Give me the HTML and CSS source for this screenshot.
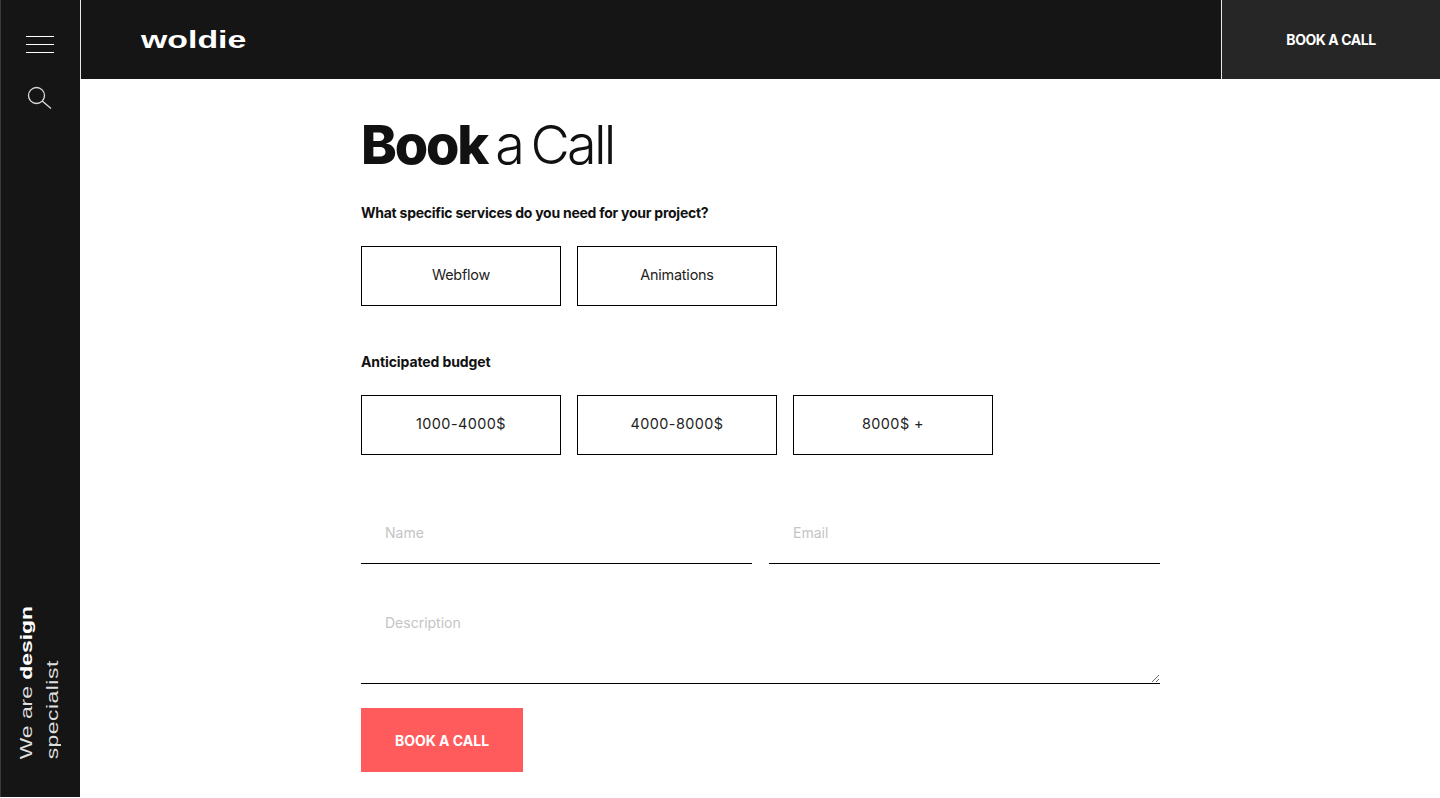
FILE: index.html
```html
<!DOCTYPE html>
<html lang="en">
<head>
<meta charset="utf-8">
<title>Book a Call - woldie</title>
<link rel="stylesheet" href="styles.css">
</head>
<body>
<div class="page">
  <aside class="side">
    <div class="side-top">
      <button class="burger" aria-label="Menu"><span></span><span></span><span></span></button>
      <svg class="search" width="26" height="26" viewBox="0 0 26 26" fill="none" stroke="#dcdcdc" stroke-width="1.3"><circle cx="9.5" cy="9.5" r="8"/><path d="M15.2 15l8.8 7.6"/></svg>
    </div>
    <div class="tagline"><div>We are <b>design</b></div><div class="tag-2">specialist</div></div>
  </aside>
  <div class="main">
    <header class="top">
      <a class="logo">woldie</a>
      <a class="top-cta">BOOK A CALL</a>
    </header>
    <form class="form">
      <h1><b>Book</b> a Call</h1>
      <p class="q">What specific services do you need for your project?</p>
      <div class="opts">
        <div class="opt">Webflow</div>
        <div class="opt">Animations</div>
      </div>
      <p class="q q2">Anticipated budget</p>
      <div class="opts">
        <div class="opt num">1000-4000$</div>
        <div class="opt num">4000-8000$</div>
        <div class="opt num">8000$ +</div>
      </div>
      <div class="fields">
        <input type="text" placeholder="Name">
        <input type="text" placeholder="Email">
      </div>
      <textarea placeholder="Description"></textarea>
      <button type="button" class="submit">BOOK A CALL</button>
    </form>
  </div>
</div>
</body>
</html>
```
FILE: styles.css
```css
* { box-sizing: border-box; }
html, body { margin: 0; height: 100%; overflow: hidden; background: #fff; }
body { font-family: Inter, "Liberation Sans", sans-serif; color: #111; }
.page { display: flex; height: 798px; }
.side {
  width: 80px; flex: none; height: 797px; background: #151515;
  border-left: 1px solid #3a3a3a;
  display: flex; flex-direction: column; justify-content: space-between; align-items: center;
}
.side-top { display: flex; flex-direction: column; align-items: center; padding-top: 36px; }
.burger { width: 28px; height: 17px; padding: 0; margin: 0 0 0 -1px; border: 0; background: none; display: flex; flex-direction: column; justify-content: space-between; }
.burger span { display: block; height: 1px; background: #fff; }
.search { margin-top: 33px; margin-left: -1px; }
.tagline {
  writing-mode: vertical-rl; white-space: nowrap;
  transform: scaleY(1.43) rotate(180deg);
  font-family: "Liberation Sans", Arial, sans-serif; font-size: 16px; line-height: 26px;
  color: #dedede; margin: 0 0 61px -2px;
}
.tagline b { color: #fff; }
.tag-2 { letter-spacing: 0.35px; }
.main { flex: 1; min-width: 0; }
.top {
  height: 79px; background: #151515; border-left: 1px solid #e8e8e8;
  display: flex; justify-content: space-between; align-items: stretch;
}
.logo {
  font-family: "Liberation Sans", Arial, sans-serif; font-weight: 700; font-size: 24px; color: #fff;
  align-self: center; margin: 0 0 0 60px; transform: scaleX(1.41); transform-origin: left center;
}
.top-cta {
  width: 219px; background: #262626; border-left: 1px solid #e8e8e8; color: #fff;
  display: flex; align-items: center; justify-content: center;
  font-size: 14px; font-weight: 700; letter-spacing: -0.45px;
}
.form { width: 799px; margin: 0 0 0 281px; padding-top: 36px; }
h1 { margin: 0 0 28px; font-size: 54px; line-height: 60px; font-weight: 300; letter-spacing: -2.8px; word-spacing: -4px; color: #111; }
h1 b { font-weight: 800; letter-spacing: -2.2px; }
.q { margin: 0 0 23px; font-size: 14px; line-height: 20px; font-weight: 700; letter-spacing: -0.25px; color: #111; }
.q2 { margin-top: 46px; letter-spacing: -0.1px; }
.opts { display: flex; gap: 16px; }
.opt {
  width: 200px; height: 60px; border: 1px solid #000; display: flex; align-items: center; justify-content: center;
  font-size: 14.4px; color: #222; letter-spacing: -0.2px; padding-bottom: 3px;
}
.num { letter-spacing: 0.45px; }
.fields { display: flex; gap: 17px; margin-top: 49px; margin-bottom: 0; }
input, textarea {
  display: block; border: 0; border-bottom: 1px solid #000; outline: 0; background: #fff; border-radius: 0;
  font: 14px/20px Inter, sans-serif; color: #111;
}
input { flex: 1; min-width: 0; height: 60px; padding: 0 24px 3px; }
textarea { width: 799px; height: 90px; margin-top: 30px; padding: 19px 24px 0; resize: vertical; }
::placeholder { color: #c4c4c4; opacity: 1; }
.submit {
  display: block; width: 162px; height: 64px; margin-top: 24px; border: 0; background: #ff5a5c; color: #fff;
  font: 700 14px/20px Inter, sans-serif; letter-spacing: 0; padding: 2px 0 0;
}
```
